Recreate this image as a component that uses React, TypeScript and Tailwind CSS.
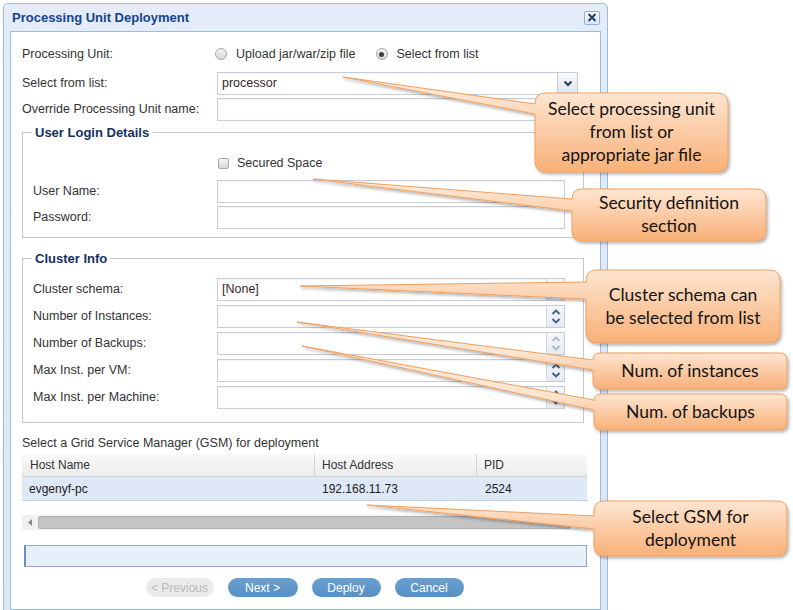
import React from 'react'

const label = 'text-[12.5px] leading-[15px] text-[#333]'

type Callout = {
  x: number
  y: number
  w: number
  h: number
  r: number
  tip: [number, number]
  a: number
  b: number
  lines: string[]
}

const callouts: Callout[] = [
  { x: 535, y: 93, w: 193, h: 79, r: 11, tip: [343, 77], a: 104, b: 114, lines: ['Select processing unit', 'from list or', 'appropriate jar file'] },
  { x: 572, y: 189, w: 194, h: 52, r: 10, tip: [313, 179], a: 199, b: 211, lines: ['Security definition', 'section'] },
  { x: 586, y: 270, w: 194, h: 73, r: 11, tip: [300, 286], a: 282, b: 299, lines: ['Cluster schema can', 'be selected from list'] },
  { x: 593, y: 353, w: 194, h: 36, r: 7, tip: [297, 322], a: 360, b: 370, lines: ['Num. of instances'] },
  { x: 594, y: 394, w: 193, h: 36, r: 7, tip: [302, 346], a: 400, b: 410, lines: ['Num. of backups'] },
  { x: 594, y: 501, w: 193, h: 55, r: 10, tip: [367, 505], a: 516, b: 529, lines: ['Select GSM for', 'deployment'] }
]

function calloutPath(c: Callout) {
  const { x, y, w, h, r, tip, a, b } = c
  const x1 = x + w
  const y1 = y + h
  return `M${x + r},${y} H${x1 - r} Q${x1},${y} ${x1},${y + r} V${y1 - r} Q${x1},${y1} ${x1 - r},${y1} H${x + r} Q${x},${y1} ${x},${y1 - r} V${b} L${tip[0]},${tip[1]} L${x},${a} V${y + r} Q${x},${y} ${x + r},${y} Z`
}

const Input = ({ className = '', children }: { className?: string; children?: React.ReactNode }) => (
  <div className={`relative flex h-[23px] items-center border border-[#c8ccd4] bg-white shadow-[inset_0_1px_1px_rgba(0,0,0,0.05)] ${className}`}>
    {children}
  </div>
)

const ComboTrigger = ({ w = 20 }: { w?: number }) => (
  <div
    className={`absolute right-0 top-0 flex h-full items-center justify-center border-l border-[#c8ccd4] bg-gradient-to-b from-[#f7f9fb] to-[#e2e7ee] ${w === 20 ? 'w-[20px]' : 'w-[18px]'}`}
  >
    <svg width="10" height="7" viewBox="0 0 10 7">
      <path d="M1.5 1.5 L5 5 L8.5 1.5" fill="none" stroke="#1d3a66" strokeWidth="2" />
    </svg>
  </div>
)

const Spinner = ({ disabled }: { disabled?: boolean }) => {
  const col = disabled ? '#a9bbd3' : '#3d5f8f'
  return (
    <div className="absolute right-0 top-0 flex h-full w-[18px] flex-col items-center justify-center gap-[3px] border-l border-[#d4d8de] bg-gradient-to-b from-[#f6f8fa] to-[#e6eaf0]">
      <svg width="10" height="6" viewBox="0 0 10 6">
        <path d="M1.5 5 L5 1.5 L8.5 5" fill="none" stroke={col} strokeWidth="1.8" />
      </svg>
      <svg width="10" height="6" viewBox="0 0 10 6">
        <path d="M1.5 1 L5 4.5 L8.5 1" fill="none" stroke={col} strokeWidth="1.8" />
      </svg>
    </div>
  )
}

const Radio = ({ checked }: { checked?: boolean }) => (
  <div className="flex h-[12px] w-[12px] items-center justify-center rounded-full border border-[#a7a7a7] bg-gradient-to-b from-[#f4f4f4] to-[#d8d8d8]">
    {checked && <div className="h-[5px] w-[5px] rounded-full bg-[#3d3d3d]" />}
  </div>
)

const Row = ({ text, lw, children, className = '' }: { text: string; lw: string; children: React.ReactNode; className?: string }) => (
  <div className={`flex items-center ${className}`}>
    <div className={`${lw} shrink-0 ${label}`}>{text}</div>
    {children}
  </div>
)

const Legend = ({ children }: { children: React.ReactNode }) => (
  <legend className="ml-[9px] px-[3px] text-[13px] font-bold leading-[15px] text-[#15325f]">{children}</legend>
)

const Button = ({ children, disabled, w }: { children: React.ReactNode; disabled?: boolean; w: string }) => (
  <div
    className={`flex h-[19px] ${w} items-center justify-center rounded-full text-[12px] ${
      disabled ? 'bg-[#ebebeb] text-[#b9b9b9]' : 'bg-gradient-to-b from-[#6aa0d0] to-[#5890c4] text-white'
    }`}
  >
    {children}
  </div>
)

export default function App() {
  return (
    <div className="relative h-[610px] w-[793px] overflow-hidden bg-white font-['Liberation_Sans',Arial,sans-serif]">
      {/* dialog window */}
      <div className="ml-[3px] mt-[3px] flex h-[612px] w-[605px] flex-col rounded-t-[5px] border border-[#99bbe8] bg-gradient-to-b from-[#e3ecf8] to-[#dde8f5]">
        <div className="flex h-[27px] shrink-0 items-center justify-between pl-[8px] pr-[7px]">
          <div className="text-[13px] font-bold text-[#15428b]">Processing Unit Deployment</div>
          <div className="flex h-[14px] w-[16px] items-center justify-center rounded-[2px] border border-[#8fb1de] bg-gradient-to-b from-white to-[#dce7f5]">
            <svg width="10" height="9" viewBox="0 0 10 9">
              <path d="M1.5 1 L8.5 8 M8.5 1 L1.5 8" stroke="#1e3d6e" strokeWidth="2" />
            </svg>
          </div>
        </div>

        <div className="mx-[6px] mb-[4px] flex flex-1 flex-col border border-[#99bbe8] bg-white pl-[11px] pt-[11px]">
          {/* processing unit */}
          <Row text="Processing Unit:" lw="w-[193px]" className="h-[22px]">
            <Radio />
            <span className={`ml-[9px] ${label}`}>Upload jar/war/zip file</span>
            <div className="ml-[20px]">
              <Radio checked />
            </div>
            <span className={`ml-[9px] ${label}`}>Select from list</span>
          </Row>
          <Row text="Select from list:" lw="w-[195px]" className="mt-[7px]">
            <Input className="w-[361px]">
              <span className="pl-[4px] text-[12.5px] text-[#3a2626]">processor</span>
              <ComboTrigger />
            </Input>
          </Row>
          <Row text="Override Processing Unit name:" lw="w-[195px]" className="mt-[3px]">
            <Input className="w-[361px]" />
          </Row>

          {/* user login */}
          <fieldset className="mt-[4px] w-[562px] border border-[#c3c8d2]">
            <Legend>User Login Details</Legend>
            <div className="flex flex-col pb-[8px] pl-[10px] pt-[16px]">
              <div className="flex h-[14px] items-center pl-[184px]">
                <div className="ml-[1px] h-[11px] w-[11px] rounded-[2px] border border-[#a9a9a9] bg-gradient-to-b from-[#f3f3f3] to-[#d9d9d9]" />
                <span className={`ml-[8px] ${label}`}>Secured Space</span>
              </div>
              <Row text="User Name:" lw="w-[184px]" className="mt-[10px]">
                <Input className="w-[348px]" />
              </Row>
              <Row text="Password:" lw="w-[184px]" className="mt-[3px]">
                <Input className="w-[348px]" />
              </Row>
            </div>
          </fieldset>

          {/* cluster info */}
          <fieldset className="mt-[13px] w-[562px] border border-[#c3c8d2]">
            <Legend>Cluster Info</Legend>
            <div className="flex flex-col gap-[4px] pb-[13px] pl-[10px] pt-[12px]">
              <Row text="Cluster schema:" lw="w-[184px]">
                <Input className="w-[348px]">
                  <span className="pl-[4px] text-[12.5px] text-[#3a2626]">[None]</span>
                  <ComboTrigger w={18} />
                </Input>
              </Row>
              <Row text="Number of Instances:" lw="w-[184px]">
                <Input className="w-[348px]">
                  <Spinner />
                </Input>
              </Row>
              <Row text="Number of Backups:" lw="w-[184px]">
                <Input className="w-[348px]">
                  <Spinner disabled />
                </Input>
              </Row>
              <Row text="Max Inst. per VM:" lw="w-[184px]">
                <Input className="w-[348px]">
                  <Spinner />
                </Input>
              </Row>
              <Row text="Max Inst. per Machine:" lw="w-[184px]">
                <Input className="w-[348px]">
                  <Spinner />
                </Input>
              </Row>
            </div>
          </fieldset>

          <div className={`mt-[13px] ${label}`}>Select a Grid Service Manager (GSM) for deployment</div>

          {/* GSM grid */}
          <div className="mt-[3px] w-[565px] text-[12px]">
            <div className="flex h-[23px] border-b border-[#d0d0d0] bg-gradient-to-b from-[#fafafa] to-[#ebebeb] text-[#333]">
              <div className="flex w-[293px] items-center border-r border-[#d4d4d4] pl-[8px]">Host Name</div>
              <div className="flex w-[162px] items-center border-r border-[#d4d4d4] pl-[7px]">Host Address</div>
              <div className="flex flex-1 items-center pl-[7px]">PID</div>
            </div>
            <div className="flex h-[24px] border-b border-dotted border-[#a9bfe3] bg-[#dfe8f6] text-[#222]">
              <div className="flex w-[293px] items-center pl-[7px]">evgenyf-pc</div>
              <div className="flex w-[162px] items-center pl-[7px]">192.168.11.73</div>
              <div className="flex flex-1 items-center pl-[8px]">2524</div>
            </div>
            <div className="mt-[14px] flex h-[15px] items-center bg-[#f0f0f0]">
              <div className="flex h-full w-[16px] items-center justify-center">
                <svg width="4" height="7" viewBox="0 0 4 7">
                  <path d="M4 0 L0 3.5 L4 7 Z" fill="#8a8a8a" />
                </svg>
              </div>
              <div className="h-[13px] flex-1 rounded-[2px] border border-[#b3b3b3] bg-[#c4c4c4]" />
              <div className="flex h-full w-[16px] items-center justify-center">
                <svg width="4" height="7" viewBox="0 0 4 7">
                  <path d="M0 0 L4 3.5 L0 7 Z" fill="#8a8a8a" />
                </svg>
              </div>
            </div>
          </div>

          <div className="ml-[2px] mt-[15px] h-[22px] w-[563px] border border-l-2 border-[#8faad2] border-l-[#6f8fc4] bg-[#e8eff8]" />

          <div className="mt-[11px] flex w-[565px] justify-center gap-[14px]">
            <Button disabled w="w-[68px]">&lt; Previous</Button>
            <Button w="w-[70px]">Next &gt;</Button>
            <Button w="w-[69px]">Deploy</Button>
            <Button w="w-[69px]">Cancel</Button>
          </div>
        </div>
      </div>

      {/* annotation callouts */}
      <svg className="pointer-events-none absolute left-0 top-0" width="793" height="610" viewBox="0 0 793 610">
        <defs>
          <filter id="cs" x="-5%" y="-20%" width="115%" height="150%">
            <feDropShadow dx="1.5" dy="2" stdDeviation="1.5" floodColor="#000" floodOpacity="0.3" />
          </filter>
          {callouts.map((c, i) => (
            <linearGradient key={i} id={`cg${i}`} gradientUnits="userSpaceOnUse" x1="0" y1={c.y} x2="0" y2={c.y + c.h}>
              <stop offset="0" stopColor="#fee6d2" />
              <stop offset="1" stopColor="#f8b077" />
            </linearGradient>
          ))}
        </defs>
        {callouts.map((c, i) => (
          <path key={i} d={calloutPath(c)} fill={`url(#cg${i})`} stroke="#efa061" strokeWidth="1" filter="url(#cs)" />
        ))}
      </svg>
      {callouts.map((c, i) => (
        <div
          key={i}
          className="absolute flex flex-col items-center justify-center font-['Lato',sans-serif] text-[17.5px] leading-[23px] text-[#141414]"
          style={{ left: c.x, top: c.y - 1, width: c.w, height: c.h }}
        >
          {c.lines.map((l) => (
            <div key={l}>{l}</div>
          ))}
        </div>
      ))}
    </div>
  )
}
